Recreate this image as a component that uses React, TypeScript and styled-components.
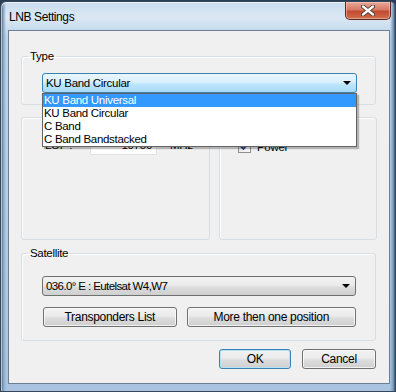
import styled, { createGlobalStyle } from 'styled-components';

const GlobalStyle = createGlobalStyle`
  html, body {
    margin: 0;
    padding: 0;
    background: #2b3d52;
  }
  body {
    font-family: 'Liberation Sans', Arial, sans-serif;
    font-size: 11.5px;
    letter-spacing: -0.3px;
    color: #000;
  }
`;

const typeOptions = ['KU Band Universal', 'KU Band Circular', 'C Band', 'C Band Bandstacked'];

const App = () => {
  return (
    <>
      <GlobalStyle />
      <Window>
        <TitleBar>
          <Title>LNB Settings</Title>
          <CloseButton>
            <svg width="14" height="11" viewBox="0 0 14 11">
              <path d="M2 1.5 L12 9.5 M12 1.5 L2 9.5" stroke="#3b2a28" strokeWidth="4" strokeLinecap="round" />
              <path d="M2 1.5 L12 9.5 M12 1.5 L2 9.5" stroke="#ffffff" strokeWidth="2.4" strokeLinecap="round" />
            </svg>
          </CloseButton>
        </TitleBar>
        <Client>
          <GroupBox>
            <Legend>Type</Legend>
            <ComboWrap>
              <Combo active>
                <span>KU Band Circular</span>
                <Arrow />
              </Combo>
              <DropList>
                {typeOptions.map((opt, i) => (
                  <DropItem key={opt} selected={i === 0}>
                    {opt}
                  </DropItem>
                ))}
              </DropList>
            </ComboWrap>
          </GroupBox>

          <PanelRow>
            <Panel>
              <LofRow>
                <FieldLabel>LOF :</FieldLabel>
                <NumberInput>10750</NumberInput>
                <Unit>MHz</Unit>
              </LofRow>
            </Panel>
            <Panel>
              <CheckRow>
                <CheckBox>
                  <svg width="9" height="9" viewBox="0 0 9 9">
                    <path d="M1 4.5 L3.5 7 L8 1.5" stroke="#2c3e8c" strokeWidth="1.8" fill="none" />
                  </svg>
                </CheckBox>
                <span>Power</span>
              </CheckRow>
            </Panel>
          </PanelRow>

          <GroupBox spaced>
            <Legend>Satellite</Legend>
            <Combo>
              <NarrowText>036.0° E : Eutelsat W4,W7</NarrowText>
              <Arrow />
            </Combo>
            <ButtonRow>
              <PushButton width={134}>Transponders List</PushButton>
              <PushButton width={170}>More then one position</PushButton>
            </ButtonRow>
          </GroupBox>

          <Footer>
            <PushButton width={72} isDefault>
              OK
            </PushButton>
            <PushButton width={74}>Cancel</PushButton>
          </Footer>
        </Client>
      </Window>
    </>
  );
};

const Window = styled.div`
  box-sizing: border-box;
  width: 396px;
  height: 391px;
  margin-top: 1px;
  border: 1px solid #34475c;
  border-radius: 6px 6px 0 0;
  background:
    linear-gradient(90deg, #3d5670 0px, #7fa0bf 2px, transparent 5px),
    linear-gradient(270deg, #3d5670 0px, #7fa0bf 2px, transparent 5px),
    linear-gradient(180deg, #c9dcee 0%, #dbe8f4 4%, #bcd3ea 9%, #b5cde6 50%, #a9c3e0 100%);
  box-shadow: inset 1px 1px 0 rgba(255, 255, 255, 0.6);
  display: flex;
  flex-direction: column;
`;

const TitleBar = styled.div`
  height: 28px;
  display: flex;
  align-items: flex-start;
  justify-content: space-between;
  padding: 0 4px 0 8px;
`;

const Title = styled.div`
  font-size: 12px;
  margin-top: 8px;
  letter-spacing: -0.4px;
`;

const CloseButton = styled.div`
  width: 46px;
  height: 18px;
  box-sizing: border-box;
  border: 1px solid #5a2a22;
  border-top: none;
  border-radius: 0 0 5px 5px;
  background: linear-gradient(180deg, #e9a99b 0%, #d77a65 45%, #c24a30 55%, #cf6e4e 100%);
  box-shadow: inset 0 0 0 1px rgba(255, 210, 200, 0.5);
  display: flex;
  align-items: center;
  justify-content: center;
`;

const Client = styled.div`
  flex: 1;
  margin: 0 5px 7px 7px;
  border: 1px solid #6c7f94;
  background: #f0f0f0;
  padding: 18px 13px 0 12px;
  display: flex;
  flex-direction: column;
`;

const GroupBox = styled.fieldset<{ spaced?: boolean }>`
  margin: ${(p) => (p.spaced ? '6px 0 0 0' : '0')};
  padding: ${(p) => (p.spaced ? '16px 19px 13px 20px' : '10px 18px 11px 20px')};
  border: 1px solid #d5dfe5;
  border-radius: 3px;
  box-shadow: inset 1px 1px 0 #fff;
  min-width: 0;
`;

const Legend = styled.legend`
  margin-left: -14px;
  padding: 0 2px;
  line-height: 14px;
`;

const ComboWrap = styled.div`
  position: relative;
`;

const Combo = styled.div<{ active?: boolean }>`
  box-sizing: border-box;
  height: 20px;
  border: 1px solid ${(p) => (p.active ? '#3c7fb1' : '#707070')};
  border-radius: 3px;
  background: ${(p) =>
    p.active
      ? 'linear-gradient(180deg, #eaf6fd 0%, #d9f0fc 45%, #bee6fd 55%, #a7d9f5 100%)'
      : 'linear-gradient(180deg, #f2f2f2 0%, #ebebeb 45%, #dddddd 55%, #cfcfcf 100%)'};
  display: flex;
  align-items: center;
  justify-content: space-between;
  padding: 0 5px 0 3px;
`;

const NarrowText = styled.span`
  letter-spacing: -0.6px;
`;

const Arrow = styled.span`
  width: 0;
  height: 0;
  border-left: 4px solid transparent;
  border-right: 4px solid transparent;
  border-top: 4px solid #000;
`;

const DropList = styled.div`
  position: absolute;
  left: 0;
  top: 20px;
  width: 315px;
  box-sizing: border-box;
  border: 1px solid #646464;
  background: #fff;
  box-shadow: 2px 2px 1px rgba(0, 0, 0, 0.25);
  z-index: 2;
`;

const DropItem = styled.div<{ selected?: boolean }>`
  height: 13px;
  line-height: 13px;
  padding-left: 1px;
  background: ${(p) => (p.selected ? '#3399ff' : 'transparent')};
  color: ${(p) => (p.selected ? '#fff' : '#000')};
`;

const PanelRow = styled.div`
  display: grid;
  grid-template-columns: 189px 158px;
  gap: 9px;
  margin-top: 12px;
`;

const Panel = styled.div`
  height: 123px;
  box-sizing: border-box;
  border: 1px solid #d5dfe5;
  border-radius: 3px;
  box-shadow: inset 1px 1px 0 #fff;
`;

const LofRow = styled.div`
  display: flex;
  align-items: center;
  margin: 17px 0 0 23px;
`;

const FieldLabel = styled.span`
  width: 45px;
`;

const NumberInput = styled.div`
  box-sizing: border-box;
  width: 67px;
  height: 20px;
  background: #fff;
  border: 1px solid #e2e3ea;
  text-align: right;
  padding: 3px 4px 0 0;
`;

const Unit = styled.span`
  margin-left: 13px;
`;

const CheckRow = styled.div`
  display: flex;
  align-items: center;
  gap: 6px;
  margin: 22px 0 0 18px;
`;

const CheckBox = styled.div`
  box-sizing: border-box;
  width: 13px;
  height: 13px;
  border: 1px solid #8e8f8f;
  background: linear-gradient(135deg, #dcdcdc, #fbfbfb);
  display: flex;
  align-items: center;
  justify-content: center;
`;

const ButtonRow = styled.div`
  display: flex;
  gap: 10px;
  margin-top: 11px;
  padding-left: 1px;
`;

const PushButton = styled.div<{ width: number; isDefault?: boolean }>`
  box-sizing: border-box;
  width: ${(p) => p.width}px;
  height: 20px;
  border: 1px solid ${(p) => (p.isDefault ? '#3c7fb1' : '#707070')};
  border-radius: 3px;
  background: linear-gradient(180deg, #f2f2f2 0%, #ebebeb 45%, #dddddd 55%, #cfcfcf 100%);
  box-shadow: inset 0 0 0 1px ${(p) => (p.isDefault ? '#b4e3f8' : 'rgba(255,255,255,0.7)')};
  display: flex;
  align-items: center;
  justify-content: center;
  font-size: 12px;
`;

const Footer = styled.div`
  display: flex;
  justify-content: flex-end;
  gap: 11px;
  margin-top: 8px;
`;

export default App;
